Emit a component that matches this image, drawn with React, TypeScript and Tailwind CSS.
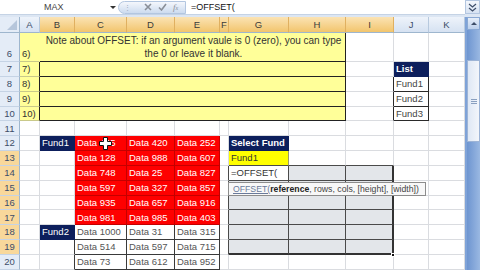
import React from "react";

type P = { c?: string; children?: React.ReactNode };

const base =
  "relative flex items-center whitespace-nowrap border-r border-b border-[#dadce0] pl-[2px] text-[9.5px] leading-none text-[#333]";

function X({ c = "", children }: P) {
  return <div className={`${base} ${c}`}>{children}</div>;
}

function RH({ n, sel, c = "" }: { n: string; sel?: boolean; c?: string }) {
  return (
    <div
      className={`flex items-center justify-center border-r border-b border-r-[#9eb6ce] border-b-[#c5d3e5] text-[9.5px] leading-none text-[#3d4d68] ${
        sel ? "bg-[#f8d89b]" : "bg-[#e4ecf7]"
      } ${c}`}
    >
      {n}
    </div>
  );
}

function CH({ l, sel }: { l: string; sel?: boolean }) {
  return (
    <div
      className={`flex items-center justify-center border-r border-b border-r-[#b7c9de] border-b-[#9eb6ce] text-[9.5px] leading-none ${
        sel
          ? "bg-linear-to-b from-[#fbe3b3] to-[#f2c56c] text-[#3a3a3a] border-r-[#e0b060]"
          : "bg-linear-to-b from-[#eef3fa] to-[#d6e2f2] text-[#3d4d68]"
      }`}
    >
      {l}
    </div>
  );
}

const data: Record<number, string[]> = {
  12: ["Data 445", "Data 420", "Data 252"],
  13: ["Data 128", "Data 988", "Data 607"],
  14: ["Data 748", "Data 25", "Data 827"],
  15: ["Data 597", "Data 327", "Data 857"],
  16: ["Data 935", "Data 657", "Data 916"],
  17: ["Data 981", "Data 985", "Data 403"],
  18: ["Data 1000", "Data 31", "Data 315"],
  19: ["Data 514", "Data 597", "Data 715"],
  20: ["Data 73", "Data 612", "Data 952"],
};

const YEL = "bg-[#ffff99]";
const NAVY = "bg-[#0d1f5c] text-white border-r-[#0d1f5c] border-b-[#0d1f5c]";
const RED = "bg-[#fe0000] text-white border-r-[#c40000] border-b-[#c40000]";
const WHT = "text-[#555] border-r-[#3a3a3a] border-b-[#3a3a3a]";
const GRAY = "bg-[#e3e6ea] border-r-[#4a4a4a] border-b-[#4a4a4a]";

function lowerRow(r: number) {
  const d = data[r];
  const sel = r >= 13 && r <= 19;
  let b: React.ReactNode = <X key="b" />;
  if (r === 12) b = <X key="b" c={NAVY}>Fund1</X>;
  else if (r === 18) b = <X key="b" c={NAVY}>Fund2</X>;
  else if (r >= 19) b = <X key="b" c="border-r-[#3a3a3a]" />;

  const dataCls = r <= 17 ? (r === 17 ? `${RED} border-b-[#5a1010]` : RED) : WHT;
  const f = r >= 14 && r <= 19 ? "border-r-[#4a4a4a]" : "";

  let g: React.ReactNode = <X key="g" />;
  let h: React.ReactNode = <X key="h" />;
  let i: React.ReactNode = <X key="i" />;
  if (r === 12) {
    g = (
      <X key="g" c={`${NAVY} font-bold`}>
        Select Fund
      </X>
    );
  } else if (r === 13) {
    g = (
      <X key="g" c="bg-[#ffff00] border-r-[#9a9a6a] border-b-[#4a4a4a]">
        Fund1
      </X>
    );
    h = <X key="h" c="border-b-[#4a4a4a]" />;
    i = <X key="i" c="border-b-[#4a4a4a]" />;
  } else if (r === 14) {
    g = (
      <X key="g" c="bg-white text-[#222] border-r-[#4a4a4a] border-b-[#4a4a4a]">
        =OFFSET(
      </X>
    );
    h = <X key="h" c={GRAY} />;
    i = <X key="i" c={`${GRAY} border-r-2 border-r-[#333]`} />;
  } else if (r >= 15 && r <= 19) {
    const last = r === 19 ? "border-b-2 border-b-[#333]" : "";
    g = <X key="g" c={`${GRAY} ${last}`} />;
    h = <X key="h" c={`${GRAY} ${last}`} />;
    i = <X key="i" c={`${GRAY} border-r-2 border-r-[#333] ${last}`} />;
  }

  return [
    <RH key="rh" n={String(r)} sel={sel} />,
    <X key="a" />,
    b,
    <X key="c" c={dataCls}>{d[0]}</X>,
    <X key="d" c={dataCls}>{d[1]}</X>,
    <X key="e" c={dataCls}>{d[2]}</X>,
    <X key="f" c={f} />,
    g,
    h,
    i,
    <X key="j" />,
    <X key="k" />,
  ];
}

function noteRow(r: number) {
  const jCls =
    r === 7
      ? "bg-[#0d1f5c] text-white font-bold border-r-[#0d1f5c] border-b-[#0d1f5c]"
      : "text-[#444] border-r-[#2a2a2a] border-b-[#2a2a2a]";
  const jTxt = r === 7 ? "List" : `Fund${r - 7}`;
  return [
    <RH key="rh" n={String(r)} />,
    <X key="a" c={`${YEL} border-r-[#222] border-b-[#c9c98a]`}>{`${r})`}</X>,
    <X key="bh" c={`col-span-7 ${YEL} border-r-[#222] border-b-[#222]`} />,
    <X key="i" c={r >= 8 ? "border-r-[#2a2a2a]" : ""} />,
    <X key="j" c={jCls}>{jTxt}</X>,
    <X key="k" />,
  ];
}

export default function App() {
  const font = { fontFamily: '"Liberation Sans", Arial, sans-serif' };
  return (
    <div className="flex h-[270px] w-[480px] overflow-hidden bg-white" style={font}>
      <div className="flex w-[465px] flex-col">
        {/* formula bar */}
        <div className="flex h-[15px] items-center border-b border-[#c5d3e5] bg-white">
          <div className="relative flex h-full w-[118px] items-center">
            <span className="ml-[44px] text-[9px] leading-none text-[#444]">MAX</span>
            <span className="absolute left-[110px] top-[6px] h-0 w-0 border-x-[3px] border-t-[3px] border-x-transparent border-t-[#333]" />
          </div>
          <div className="flex h-[13px] w-[68px] items-center rounded-l-full border border-[#b3c6e0] bg-linear-to-b from-[#f4f7fc] to-[#cddbef] pl-[5px]">
            <span className="text-[7px] leading-none text-[#9aa8bc]">⋮</span>
            <svg className="ml-[13px]" width="8" height="8" viewBox="0 0 8 8">
              <path d="M1 1L7 7M7 1L1 7" stroke="#8a8f98" strokeWidth="1.6" />
            </svg>
            <svg className="ml-[6px]" width="9" height="8" viewBox="0 0 9 8">
              <path d="M1 4.5L3.5 7L8 1" stroke="#8a8f98" strokeWidth="1.6" fill="none" />
            </svg>
            <span className="ml-[6px] font-['Liberation_Serif'] text-[9px] italic leading-none text-[#8a8f98]">
              f<span className="text-[6px]">x</span>
            </span>
          </div>
          <div className="ml-[5px] text-[9px] leading-none text-[#111]">=OFFSET(</div>
        </div>
        <div className="h-[2px] bg-[#dce6f3]" />
        {/* sheet grid */}
        <div className="relative grid grid-cols-[20px_20px_35px_52px_48px_45px_9px_60px_57px_48px_35px_36px] grid-rows-[16px_29px_repeat(14,14.85px)]">
          {/* header */}
          <div className="relative border-r border-b border-r-[#9eb6ce] border-b-[#9eb6ce] bg-[#e4ecf7]">
            <svg className="absolute bottom-[2px] right-[2px]" width="10" height="10" viewBox="0 0 10 10">
              <path d="M10 0L10 10L0 10Z" fill="#b6c6db" />
            </svg>
          </div>
          <CH l="A" />
          <CH l="B" sel />
          <CH l="C" sel />
          <CH l="D" sel />
          <CH l="E" sel />
          <CH l="F" sel />
          <CH l="G" sel />
          <CH l="H" sel />
          <CH l="I" sel />
          <CH l="J" />
          <CH l="K" />

          {/* row 6 */}
          <RH n="6" c="items-end pb-[3px]" />
          <X c={`${YEL} border-r-[#ffff99] border-b-[#c9c98a] items-end pb-[3px]`}>6)</X>
          <X c={`col-span-7 ${YEL} border-r-[#222] border-b-[#222] justify-center`}>
            <div className="text-center text-[10px] leading-[13px] text-[#333]">
              Note about OFFSET: if an argument vaule is 0 (zero), you can type
              <br />
              the 0 or leave it blank.
            </div>
          </X>
          <X />
          <X />
          <X />

          {noteRow(7)}
          {noteRow(8)}
          {noteRow(9)}
          {noteRow(10)}

          {/* row 11 */}
          <RH n="11" />
          <X />
          <X />
          <X />
          <X />
          <X />
          <X />
          <X />
          <X />
          <X />
          <X />
          <X />

          {[12, 13, 14, 15, 16, 17, 18, 19, 20].map((r) => (
            <React.Fragment key={r}>{lowerRow(r)}</React.Fragment>
          ))}

          {/* fill handle */}
          <div className="absolute left-[391px] top-[235.5px] h-[4px] w-[4px] border border-white bg-[#111]" />

          {/* tooltip */}
          <div className="absolute left-[228px] top-[165px] flex h-[14px] w-[198px] items-center overflow-hidden whitespace-nowrap border border-[#8c8c8c] bg-[#f8f8f8] pl-[4px] text-[8.7px] leading-none text-[#444]">
            <span className="text-[#6a7a9a] underline">OFFSET(</span>
            <span className="font-bold text-[#222]">reference</span>
            <span>, rows, cols, [height], [width])</span>
          </div>

          {/* cursor */}
          <svg className="absolute left-[99px] top-[120px]" width="13" height="13" viewBox="0 0 13 13">
            <path
              d="M4.5 0.5H8.5V4.5H12.5V8.5H8.5V12.5H4.5V8.5H0.5V4.5H4.5Z"
              fill="#fff"
              stroke="#111"
              strokeWidth="1"
            />
          </svg>
        </div>
      </div>

      {/* right column: ribbon expand + scrollbar */}
      <div className="flex w-[15px] flex-col">
        <div className="flex h-[14px] items-center justify-center border border-[#b3c6e0] bg-linear-to-b from-[#f4f7fc] to-[#d6e2f2]">
          <svg width="9" height="9" viewBox="0 0 9 9">
            <path d="M1 1L4.5 4L8 1M1 5L4.5 8L8 5" stroke="#3d4d68" strokeWidth="1.2" fill="none" />
          </svg>
        </div>
        <div className="h-[3px] bg-[#dce6f3]" />
        <div className="flex flex-1 flex-col bg-[#7fa3d8] pl-[2px]">
          <div className="flex h-[13px] items-center justify-center border border-[#8aa9d4] bg-linear-to-b from-[#e6eef9] to-[#bcd0ec]">
            <span className="h-0 w-0 border-x-[3px] border-b-[3px] border-x-transparent border-b-[#3d4d68]" />
          </div>
          <div className="h-[30px] bg-linear-to-r from-[#6e95d0] to-[#9ab8e2]" />
          <div className="flex h-[82px] flex-col items-center justify-center gap-[1px] border border-[#9db4d6] bg-linear-to-r from-[#dfe8f5] to-[#f3f6fb]">
            <span className="h-[1px] w-[6px] bg-[#8aa0c0]" />
            <span className="h-[1px] w-[6px] bg-[#8aa0c0]" />
            <span className="h-[1px] w-[6px] bg-[#8aa0c0]" />
          </div>
          <div className="flex-1 bg-linear-to-r from-[#6e95d0] to-[#9ab8e2]" />
        </div>
      </div>
    </div>
  );
}
